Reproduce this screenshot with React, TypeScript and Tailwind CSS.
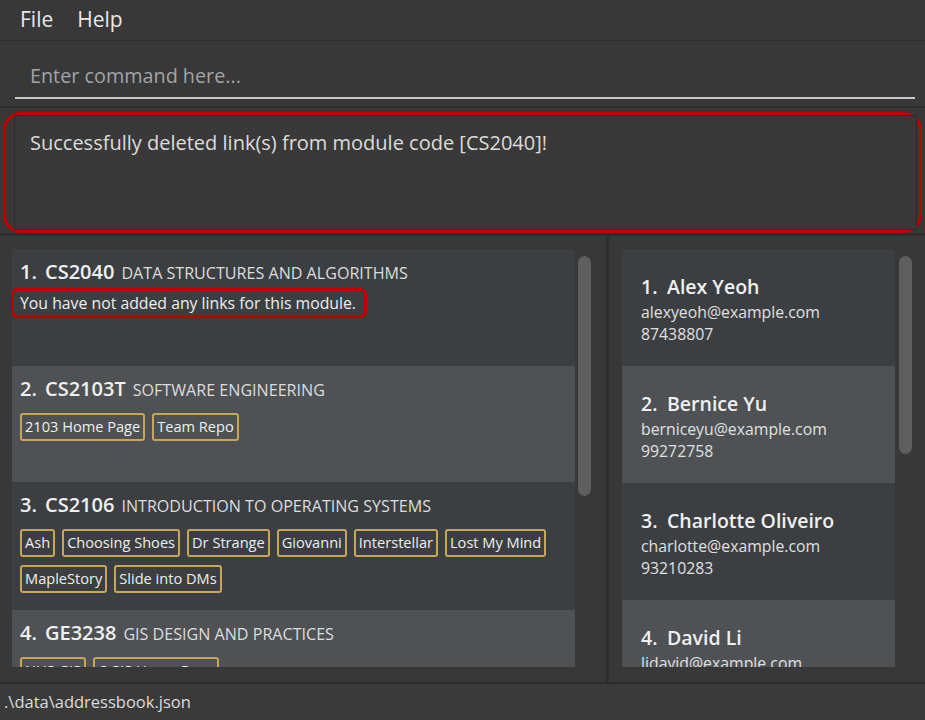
import React from 'react'

interface Module {
  code: string
  title: string
  links: string[]
}

interface Person {
  name: string
  email: string
  phone: string
}

const modules: Module[] = [
  { code: 'CS2040', title: 'DATA STRUCTURES AND ALGORITHMS', links: [] },
  { code: 'CS2103T', title: 'SOFTWARE ENGINEERING', links: ['2103 Home Page', 'Team Repo'] },
  {
    code: 'CS2106',
    title: 'INTRODUCTION TO OPERATING SYSTEMS',
    links: ['Ash', 'Choosing Shoes', 'Dr Strange', 'Giovanni', 'Interstellar', 'Lost My Mind', 'MapleStory', 'Slide into DMs'],
  },
  { code: 'GE3238', title: 'GIS DESIGN AND PRACTICES', links: ['NUS GIS', 'QGIS Home Page'] },
]

const persons: Person[] = [
  { name: 'Alex Yeoh', email: 'alexyeoh@example.com', phone: '87438807' },
  { name: 'Bernice Yu', email: 'berniceyu@example.com', phone: '99272758' },
  { name: 'Charlotte Oliveiro', email: 'charlotte@example.com', phone: '93210283' },
  { name: 'David Li', email: 'lidavid@example.com', phone: '91031282' },
]

// card heights taken from the list as it is shown
const moduleHeights = ['h-[117px]', 'h-[116px]', 'h-[128px]', 'h-[128px]']

function ModuleCard({ mod, index }: { mod: Module; index: number }) {
  const light = index % 2 === 1
  return (
    <div className={`${light ? 'bg-[#4e5254]' : 'bg-[#3c3f41]'} ${moduleHeights[index]} px-[8px] pt-[8px] shrink-0`}>
      <div className="flex items-baseline text-[#f0f0f0] h-[24px]">
        <span className="text-[20px] font-semibold w-[25px]">{index + 1}.</span>
        <span className="text-[20px] font-semibold">{mod.code}</span>
        <span className="text-[16.1px] text-[#dddddd] ml-[7px]">{mod.title}</span>
      </div>
      {mod.links.length === 0 ? (
        <div className="mt-[7px]">
          <div className="inline-block text-[15.8px] leading-[22px] text-[#eeeeee] border-[3px] border-[#c00000] rounded-[6px] pl-[6px] pr-[8px] py-[1px] -ml-[9px]">
            You have not added any links for this module.
          </div>
        </div>
      ) : (
        <div className="flex flex-wrap gap-x-[7px] gap-y-[8px] mt-[15px]">
          {mod.links.map((l) => (
            <span
              key={l}
              className="h-[28px] flex items-center px-[3px] border-2 border-[#c9a55a] rounded-[3px] text-[14.6px] text-[#eeeeee]"
            >
              {l}
            </span>
          ))}
        </div>
      )}
    </div>
  )
}

function PersonCard({ p, index }: { p: Person; index: number }) {
  const light = index % 2 === 1
  return (
    <div className={`${light ? 'bg-[#4e5254]' : 'bg-[#3c3f41]'} h-[117px] px-[19px] pt-[23px] shrink-0`}>
      <div className="flex items-baseline text-[#f0f0f0] text-[19.5px] font-semibold h-[26px]">
        <span className="w-[26px]">{index + 1}.</span>
        <span>{p.name}</span>
      </div>
      <div className="text-[15.8px] text-[#e0e0e0] leading-[22px] mt-[3px]">{p.email}</div>
      <div className="text-[15.8px] text-[#e0e0e0] leading-[22px]">{p.phone}</div>
    </div>
  )
}

export default function App() {
  return (
    <div className="w-[925px] h-[720px] bg-[#383838] flex flex-col overflow-hidden font-['Open_Sans',sans-serif]">
      <div className="h-[41px] flex items-center gap-[24px] px-[20px] text-[21px] text-[#e8e8e8] border-b border-[#2b2b2b] shrink-0">
        <span>File</span>
        <span>Help</span>
      </div>

      <div className="h-[67px] pl-[15px] pr-[10px] pt-[13px] border-b-2 border-[#2e2e2e] shrink-0">
        <div className="h-[45px] border-b-2 border-[#c8c8c8] px-[15px] flex items-center text-[19.8px] text-[#a0a4a8]">
          Enter command here...
        </div>
      </div>

      <div className="h-[128px] px-[3px] pt-[4px] border-b-[3px] border-[#2e2e2e] shrink-0">
        <div className="h-[121px] border-[3px] border-[#c00000] rounded-[18px] pl-[8px] pr-[2px]">
          <div className="h-full border border-[#2c2c2c] bg-[#393939] px-[15px] pt-[12px] text-[20px] text-[#dcdcdc]">
            Successfully deleted link(s) from module code [CS2040]!
          </div>
        </div>
      </div>

      <div className="flex-1 flex min-h-0">
        <div className="w-[609px] flex pl-[12px] pt-[13px] pb-[15px] border-r-[3px] border-[#2e2e2e] shrink-0">
          <div className="w-[563px] flex flex-col overflow-hidden">
            {modules.map((m, i) => (
              <ModuleCard key={m.code} mod={m} index={i} />
            ))}
          </div>
          <div className="ml-[3px] w-[13px] pt-[7px]">
            <div className="h-[240px] rounded-full bg-[#5e5e5e]" />
          </div>
        </div>
        <div className="flex-1 flex pl-[13px] pt-[13px] pb-[15px]">
          <div className="w-[273px] flex flex-col overflow-hidden">
            {persons.map((p, i) => (
              <PersonCard key={p.name} p={p} index={i} />
            ))}
          </div>
          <div className="ml-[4px] w-[13px] pt-[7px]">
            <div className="h-[198px] rounded-full bg-[#5e5e5e]" />
          </div>
        </div>
      </div>

      <div className="h-[38px] border-t-2 border-[#2b2b2b] bg-[#3a3a3a] flex items-center px-[4px] text-[16.5px] text-[#dcdcdc] shrink-0">
        .\data\addressbook.json
      </div>
    </div>
  )
}
